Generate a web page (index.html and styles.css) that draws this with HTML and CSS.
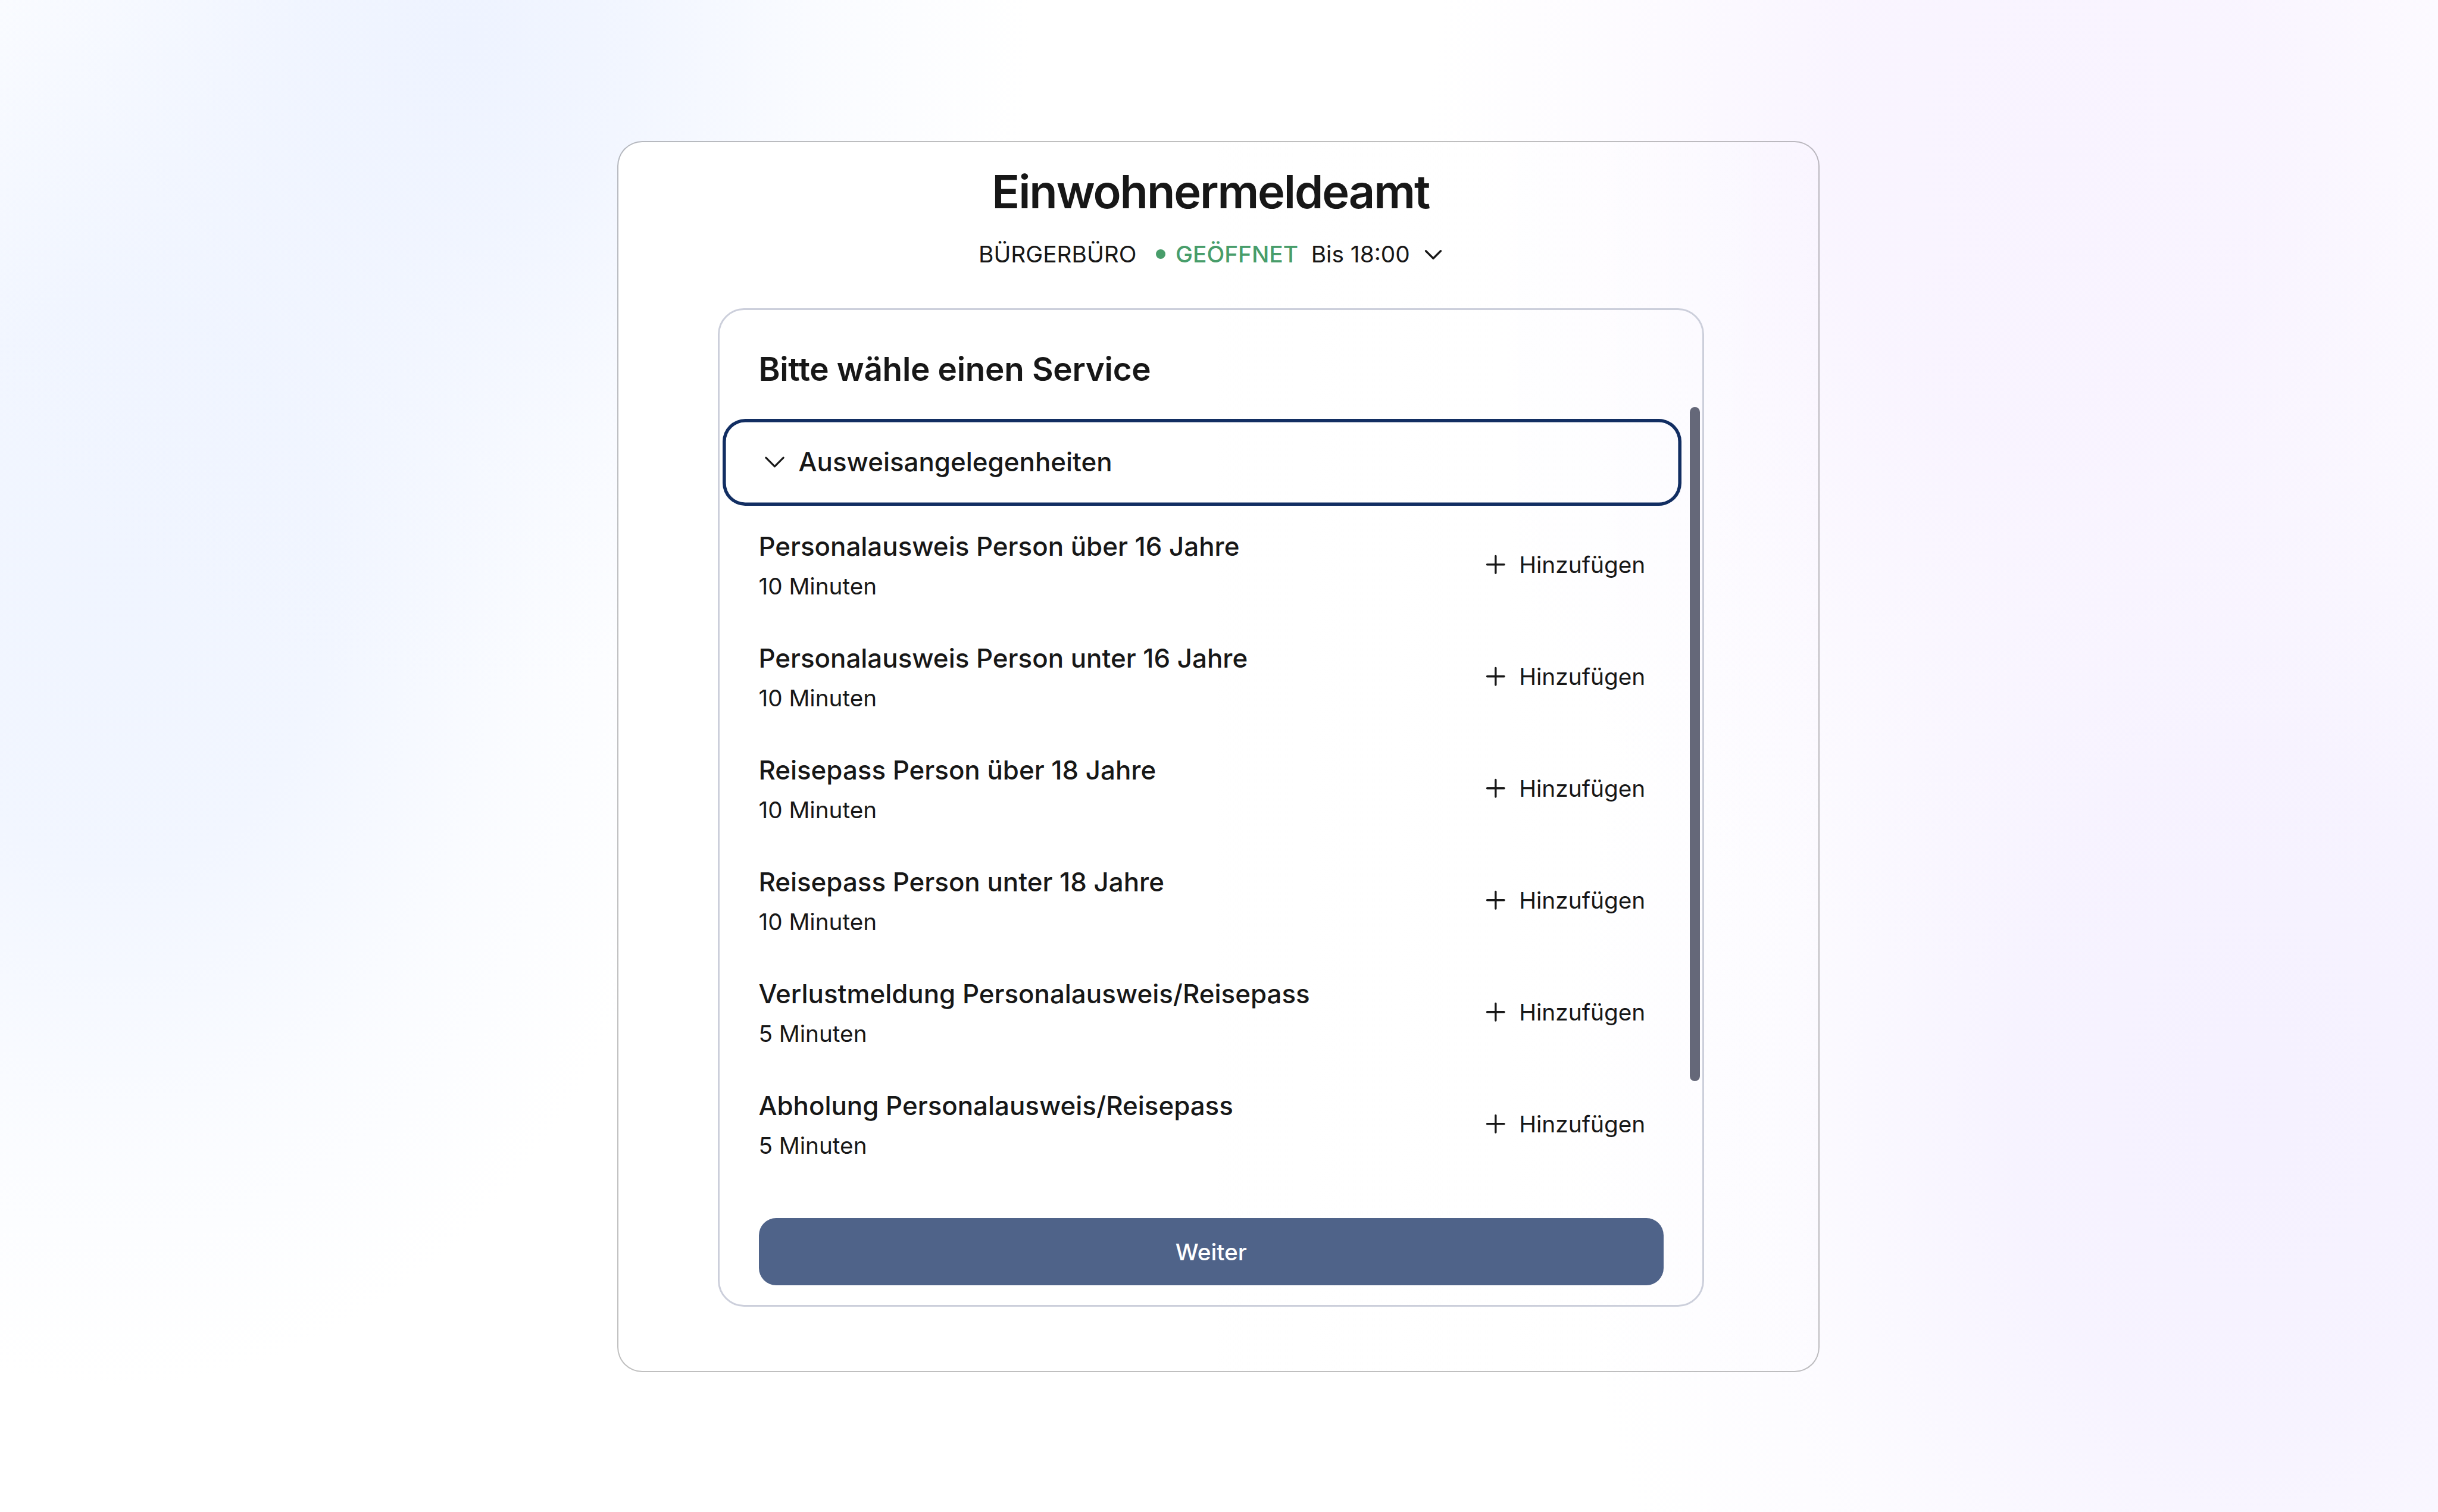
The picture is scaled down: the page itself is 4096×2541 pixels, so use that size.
FILE: index.html
```
<!DOCTYPE html>
<html lang="de">
<head>
  <meta charset="UTF-8">
  <title>Einwohnermeldeamt</title>
  <meta name="viewport" content="width=device-width, initial-scale=1.0">
  <link rel="stylesheet" href="styles.css">
</head>
<body>

  <!-- Icons -->
  <svg class="sprite">
    <symbol id="chevron" viewBox="0 0 24 24">
      <path d="M19.5 8.25l-7.5 7.5-7.5-7.5"/>
    </symbol>
    <symbol id="plus" viewBox="0 0 24 24">
      <path d="M12 4.5v15M4.5 12h15"/>
    </symbol>
  </svg>

  <main class="page-card">
    <h1>Einwohnermeldeamt</h1>

    <div class="office">
      <span class="office-name">BÜRGERBÜRO</span>
      <span class="dot"></span>
      <span class="status">GEÖFFNET</span>
      <span class="hours">Bis 18:00</span>
      <svg class="icon office-chevron"><use href="#chevron"/></svg>
    </div>

    <section class="service-card">
      <h2>Bitte wähle einen Service</h2>

      <button class="category">
        <svg class="icon"><use href="#chevron"/></svg>
        <span>Ausweisangelegenheiten</span>
      </button>

      <ul class="services">
        <li>
          <div>
            <h3>Personalausweis Person über 16 Jahre</h3>
            <p>10 Minuten</p>
          </div>
          <button class="add"><svg class="icon"><use href="#plus"/></svg>Hinzufügen</button>
        </li>
        <li>
          <div>
            <h3>Personalausweis Person unter 16 Jahre</h3>
            <p>10 Minuten</p>
          </div>
          <button class="add"><svg class="icon"><use href="#plus"/></svg>Hinzufügen</button>
        </li>
        <li>
          <div>
            <h3>Reisepass Person über 18 Jahre</h3>
            <p>10 Minuten</p>
          </div>
          <button class="add"><svg class="icon"><use href="#plus"/></svg>Hinzufügen</button>
        </li>
        <li>
          <div>
            <h3>Reisepass Person unter 18 Jahre</h3>
            <p>10 Minuten</p>
          </div>
          <button class="add"><svg class="icon"><use href="#plus"/></svg>Hinzufügen</button>
        </li>
        <li>
          <div>
            <h3>Verlustmeldung Personalausweis/Reisepass</h3>
            <p>5 Minuten</p>
          </div>
          <button class="add"><svg class="icon"><use href="#plus"/></svg>Hinzufügen</button>
        </li>
        <li>
          <div>
            <h3>Abholung Personalausweis/Reisepass</h3>
            <p>5 Minuten</p>
          </div>
          <button class="add"><svg class="icon"><use href="#plus"/></svg>Hinzufügen</button>
        </li>
      </ul>

      <button class="next">Weiter</button>

      <div class="scrollbar"></div>
    </section>
  </main>

</body>
</html>
```
FILE: styles.css
```
* {
  box-sizing: border-box;
  margin: 0;
  padding: 0;
}

body {
  width: 4096px;
  height: 2541px;
  overflow: hidden;
  padding: 237px 0 0 1036.6px;
  font-family: Inter, sans-serif;
  font-size: 38.8px;
  color: #171717;
  background:
    radial-gradient(ellipse 950px 1100px at 780px 60px, rgba(235, 241, 255, 0.85), rgba(235, 241, 255, 0.65) 30%, rgba(235, 241, 255, 0.25) 65%, rgba(235, 241, 255, 0)),
    radial-gradient(ellipse 1000px 1350px at 200px 980px, rgba(236, 242, 255, 0.8), rgba(236, 242, 255, 0.7) 35%, rgba(236, 242, 255, 0.25) 70%, rgba(236, 242, 255, 0)),
    radial-gradient(ellipse 1050px 1400px at 3450px 260px, rgba(246, 239, 255, 0.75), rgba(246, 239, 255, 0.65) 35%, rgba(246, 239, 255, 0.25) 70%, rgba(246, 239, 255, 0)),
    radial-gradient(ellipse 1150px 1600px at 3780px 1850px, rgba(243, 238, 255, 0.85), rgba(243, 238, 255, 0.7) 35%, rgba(243, 238, 255, 0.22) 70%, rgba(243, 238, 255, 0)),
    #fff;
}

button {
  font: inherit;
  color: inherit;
  background: none;
  border: none;
}

.sprite {
  display: none;
}

.icon {
  display: block;
  flex: none;
  fill: none;
  stroke: currentColor;
  stroke-linecap: round;
  stroke-linejoin: round;
}

/* Outer card */
.page-card {
  display: flex;
  flex-direction: column;
  align-items: center;
  width: 2020.3px;
  height: 2069.4px;
  padding: 35.5px 24.4px 0 0;
  border: 2px solid rgba(0, 0, 0, 0.25);
  border-radius: 42px;
  background: linear-gradient(to right, #fff 50%, rgba(255, 255, 255, 0)) padding-box;
}

h1 {
  margin-right: 1.6px;
  font-size: 77.5px;
  font-weight: 600;
  line-height: 94px;
  letter-spacing: -0.027em;
}

.office {
  display: flex;
  align-items: center;
  height: 56px;
  margin: 30.3px 0 0 3px;
  line-height: 56px;
}

.dot {
  width: 16.4px;
  height: 16.4px;
  margin: 0 16.7px 0 32.5px;
  border-radius: 50%;
  background: #489d6a;
}

.status {
  font-weight: 500;
  color: #489d6a;
}

.hours {
  margin: 0 19.2px 0 21.7px;
}

.office-chevron {
  width: 40px;
  height: 40px;
  margin-top: 2px;
  stroke-width: 2;
}

/* Service selection */
.service-card {
  position: relative;
  width: 1657.5px;
  height: 1677.7px;
  margin-top: 63.5px;
  padding-top: 65.8px;
  border: 3px solid #cccfdb;
  border-radius: 44px;
}

h2 {
  margin-left: 65.6px;
  font-size: 54.8px;
  font-weight: 600;
  line-height: 66px;
  letter-spacing: -0.28px;
}

.category {
  display: flex;
  align-items: center;
  gap: 16px;
  width: 1611.1px;
  height: 146.4px;
  margin: 50.5px 0 0 4.9px;
  padding: 0 0 1px 64.8px;
  border-radius: 38px;
  box-shadow: inset 0 0 0 5.6px #122e62;
  font-size: 43.85px;
  font-weight: 500;
}

.category .icon {
  width: 47px;
  height: 47px;
  stroke-width: 1.6;
}

.services {
  display: flex;
  flex-direction: column;
  gap: 61px;
  padding: 38px 96px 0 65.6px;
  list-style: none;
}

.services li {
  display: flex;
  justify-content: space-between;
  align-items: center;
  height: 127px;
}

h3 {
  font-size: 43.85px;
  font-weight: 500;
  line-height: 62px;
}

.services p {
  margin-top: 5px;
  font-size: 38.7px;
  line-height: 60px;
}

.add {
  display: flex;
  align-items: center;
  gap: 16.4px;
  padding-bottom: 5px;
}

.add .icon {
  width: 45.6px;
  height: 45.6px;
  stroke-width: 1.8;
}

.next {
  display: block;
  width: 1520px;
  height: 113.3px;
  margin: 91.7px 0 0 66px;
  border-radius: 29px;
  background: #4f6389;
  color: #fff;
  font-weight: 500;
}

.scrollbar {
  position: absolute;
  top: 162.7px;
  left: 1630.2px;
  width: 16.8px;
  height: 1133.3px;
  border-radius: 8.4px;
  background: #656879;
}
```
